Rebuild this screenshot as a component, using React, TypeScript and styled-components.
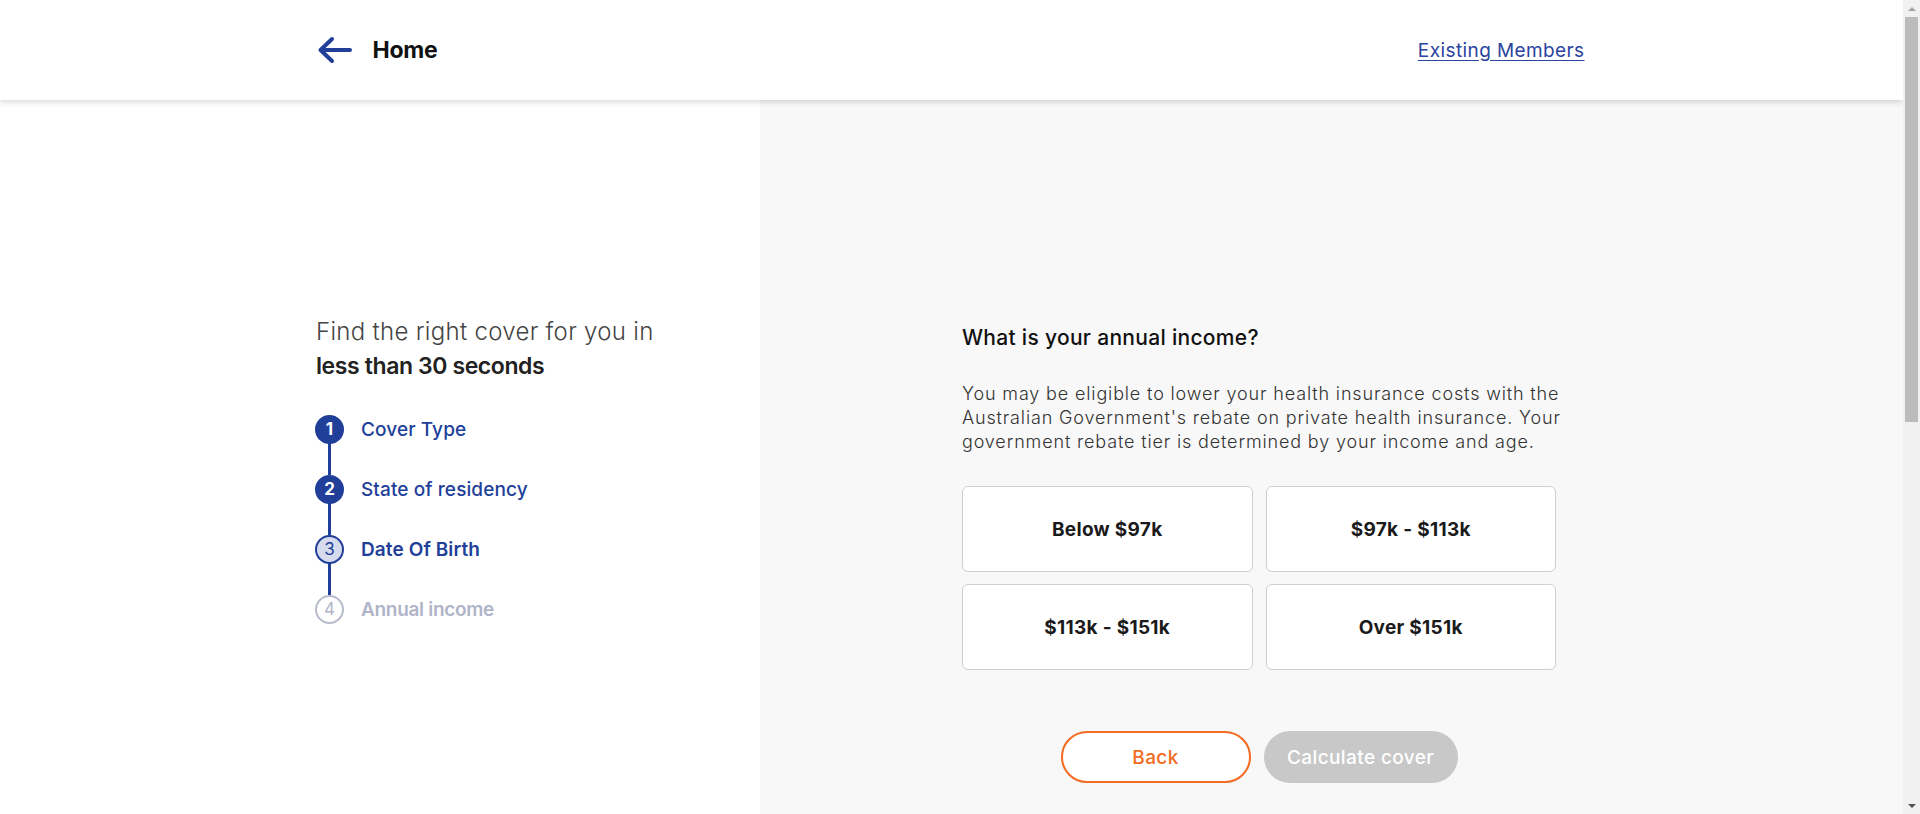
import React from "react";
import styled, { createGlobalStyle } from "styled-components";

const NAVY = "#213f99";
const ORANGE = "#f26b21";

const GlobalStyle = createGlobalStyle`
  html, body { margin: 0; padding: 0; }
  body {
    background: #ffffff;
    font-family: Inter, "Open Sans", Arial, sans-serif;
    color: #1a1a1a;
  }
  * { box-sizing: border-box; }
`;

const Page = styled.div`
  margin-right: 17px;
`;

/* Window scrollbar, drawn over the page's right edge */
const ScrollTrack = styled.div`
  position: fixed;
  top: 0;
  right: 0;
  bottom: 0;
  width: 17px;
  z-index: 10;
  background: #f1f1f1;
  display: flex;
  flex-direction: column;
  align-items: stretch;
`;

const ScrollArrow = styled.div<{ $dir: "up" | "down" }>`
  height: 17px;
  flex: none;
  display: flex;
  align-items: center;
  justify-content: center;
  &::before {
    content: "";
    width: 0;
    height: 0;
    border-left: 4px solid transparent;
    border-right: 4px solid transparent;
    ${(p) =>
      p.$dir === "up"
        ? "border-bottom: 4px solid #a3a3a3;"
        : "border-top: 4px solid #505050;"}
  }
`;

const ScrollThumb = styled.div`
  height: 405px;
  flex: none;
  margin: 0 2px;
  background: #bcbcbc;
`;

const ScrollSpacer = styled.div`
  flex: 1;
`;

const Header = styled.header`
  position: relative;
  z-index: 2;
  height: 100px;
  background: #fff;
  box-shadow: 0 2px 6px rgba(0, 0, 0, 0.16);
`;

const HeaderInner = styled.div`
  width: 1270px;
  height: 100%;
  margin: 0 auto;
  display: flex;
  align-items: center;
  justify-content: space-between;
`;

const HomeLink = styled.a`
  display: flex;
  align-items: center;
  gap: 20px;
  color: #111;
  text-decoration: none;
  font-size: 23px;
  font-weight: 700;
  letter-spacing: -0.3px;
`;

const MembersLink = styled.a`
  color: #2a44a0;
  font-size: 19px;
  font-weight: 400;
  letter-spacing: 0.4px;
  text-decoration: underline;
  text-underline-offset: 3px;
  margin-right: 2px;
`;

const Main = styled.main`
  display: grid;
  grid-template-columns: 760px 1fr;
  min-height: 1470px;
`;

const LeftPanel = styled.section`
  background: #fff;
  padding: 214px 0 0 316px;
`;

const Intro = styled.p`
  margin: 0;
  font-size: 24px;
  line-height: 35px;
  font-weight: 300;
  color: #444;
  letter-spacing: 0.3px;
`;

const IntroStrong = styled.strong`
  display: block;
  font-size: 23px;
  font-weight: 600;
  color: #222;
  letter-spacing: -0.4px;
`;

const Steps = styled.ol`
  list-style: none;
  margin: 15px 0 0 -1px;
  padding: 0;
`;

type StepState = "done" | "current" | "todo";

const Step = styled.li`
  position: relative;
  display: flex;
  align-items: center;
  gap: 17px;
  height: 60px;
`;

const Connector = styled.span`
  position: absolute;
  left: 13px;
  top: 44px;
  width: 3px;
  height: 32px;
  background: ${NAVY};
`;

const Circle = styled.span<{ $state: StepState }>`
  width: 29px;
  height: 29px;
  border-radius: 50%;
  display: flex;
  align-items: center;
  justify-content: center;
  font-size: 17px;
  font-weight: ${(p) => (p.$state === "done" ? 700 : 400)};
  border: 2px solid ${(p) => (p.$state === "todo" ? "#b8bccb" : NAVY)};
  background: ${(p) =>
    p.$state === "done" ? NAVY : p.$state === "current" ? "#d6dbee" : "#fff"};
  color: ${(p) =>
    p.$state === "done" ? "#fff" : p.$state === "current" ? NAVY : "#b0b4c4"};
`;

const StepLabel = styled.span<{ $state: StepState }>`
  font-size: 19px;
  font-weight: ${(p) => (p.$state === "done" ? 500 : 600)};
  color: ${(p) => (p.$state === "todo" ? "#b0b4c8" : NAVY)};
  letter-spacing: ${(p) => (p.$state === "todo" ? "-0.3px" : "0.1px")};
`;

const RightPanel = styled.section`
  background: #f8f8f8;
  padding: 224px 0 0 202px;
`;

const Question = styled.h2`
  margin: 0;
  font-size: 21px;
  line-height: 28px;
  font-weight: 500;
  color: #111;
  letter-spacing: 0.3px;
`;

const Lead = styled.p`
  margin: 30px 0 0;
  width: 640px;
  font-size: 18px;
  line-height: 24px;
  font-weight: 300;
  color: #333;
  letter-spacing: 0.85px;
`;

const OptionGrid = styled.div`
  margin-top: 32px;
  width: 594px;
  display: grid;
  grid-template-columns: 1fr 1fr;
  gap: 12px 13px;
`;

const Option = styled.button`
  height: 86px;
  background: #fff;
  border: 1px solid #cfcfcf;
  border-radius: 6px;
  font-family: inherit;
  font-size: 19px;
  font-weight: 700;
  color: #1a1a1a;
  letter-spacing: 0.3px;
  cursor: pointer;
`;

const Actions = styled.div`
  margin-top: 61px;
  width: 594px;
  display: flex;
  justify-content: center;
  gap: 13px;
`;

const PillButton = styled.button<{ $variant: "outline" | "disabled" }>`
  height: 52px;
  border-radius: 26px;
  font-family: inherit;
  font-size: 19px;
  font-weight: 500;
  letter-spacing: 0.4px;
  padding: 0;
  cursor: pointer;
  ${(p) =>
    p.$variant === "outline"
      ? `width: 190px; background: #fff; border: 2px solid ${ORANGE}; color: ${ORANGE};`
      : `width: 194px; background: #c8c8c8; border: none; color: #fff;`}
`;

const steps: { label: string; state: StepState }[] = [
  { label: "Cover Type", state: "done" },
  { label: "State of residency", state: "done" },
  { label: "Date Of Birth", state: "current" },
  { label: "Annual income", state: "todo" },
];

const options = ["Below $97k", "$97k - $113k", "$113k - $151k", "Over $151k"];

export default function App() {
  return (
    <>
      <GlobalStyle />
      <Page>
        <Header>
          <HeaderInner>
            <HomeLink href="#">
              <svg width="36" height="28" viewBox="0 0 36 28" fill="none">
                <path
                  d="M33 14H4M15 3L3.5 14L15 25"
                  stroke={NAVY}
                  strokeWidth="4"
                  strokeLinecap="round"
                  strokeLinejoin="round"
                />
              </svg>
              Home
            </HomeLink>
            <MembersLink href="#">Existing Members</MembersLink>
          </HeaderInner>
        </Header>
        <Main>
          <LeftPanel>
            <Intro>
              Find the right cover for you in
              <IntroStrong>less than 30 seconds</IntroStrong>
            </Intro>
            <Steps>
              {steps.map((s, i) => (
                <Step key={s.label}>
                  <Circle $state={s.state}>{i + 1}</Circle>
                  <StepLabel $state={s.state}>{s.label}</StepLabel>
                  {i < steps.length - 1 && <Connector />}
                </Step>
              ))}
            </Steps>
          </LeftPanel>
          <RightPanel>
            <Question>What is your annual income?</Question>
            <Lead>
              You may be eligible to lower your health insurance costs with the
              Australian Government's rebate on private health insurance. Your
              government rebate tier is determined by your income and age.
            </Lead>
            <OptionGrid>
              {options.map((o) => (
                <Option key={o}>{o}</Option>
              ))}
            </OptionGrid>
            <Actions>
              <PillButton $variant="outline">Back</PillButton>
              <PillButton $variant="disabled">Calculate cover</PillButton>
            </Actions>
          </RightPanel>
        </Main>
      </Page>
      <ScrollTrack aria-hidden="true">
        <ScrollArrow $dir="up" />
        <ScrollThumb />
        <ScrollSpacer />
        <ScrollArrow $dir="down" />
      </ScrollTrack>
    </>
  );
}
